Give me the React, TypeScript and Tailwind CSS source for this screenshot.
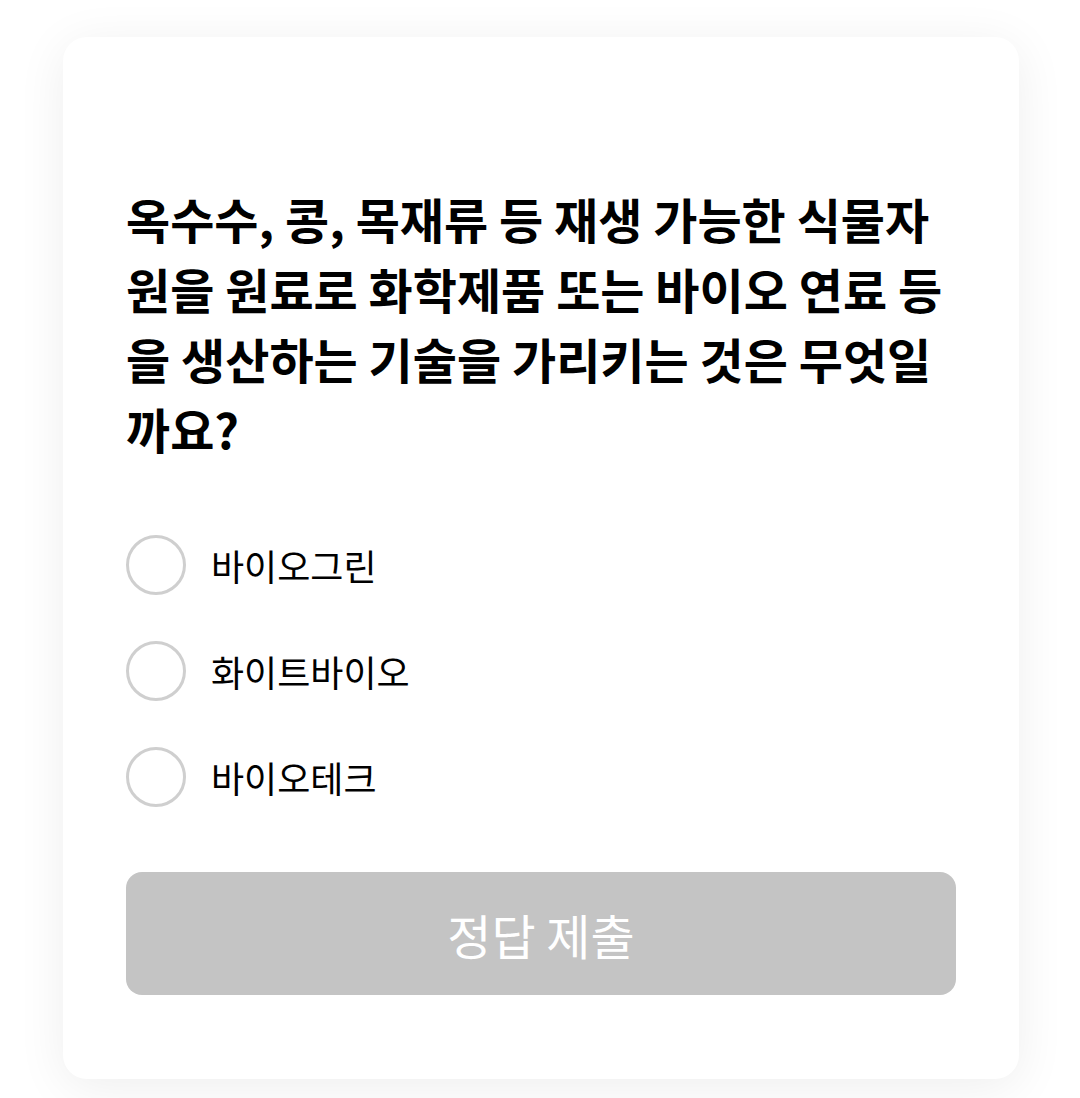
export default function App() {
  const options = ["바이오그린", "화이트바이오", "바이오테크"];

  return (
    <div
      className="min-h-screen bg-white pl-[63px] pr-[61px] pt-[37px] pb-[19px]"
      style={{ fontFamily: '"Noto Sans CJK KR", "Noto Sans", sans-serif' }}
    >
      <div className="rounded-[24px] bg-white px-[63px] pt-[146px] pb-[84px] shadow-[0_8px_50px_rgba(0,0,0,0.07)]">
        <h2 className="text-[48px] leading-[70px] font-bold break-all text-black">
          옥수수, 콩, 목재류 등 재생 가능한 식물자원을 원료로 화학제품 또는 바이오 연료 등을 생산하는 기술을 가리키는 것은 무엇일까요?
        </h2>

        <ul className="mt-[72px] flex flex-col gap-[46px]">
          {options.map((label) => (
            <li key={label} className="flex h-[60px] items-center gap-[25px]">
              <span className="h-[60px] w-[60px] shrink-0 rounded-full border-[3px] border-[#cfcfcf]" />
              <span className="text-[36px] leading-none text-black">{label}</span>
            </li>
          ))}
        </ul>

        <button
          type="button"
          disabled
          className="mt-[65px] flex h-[123px] w-full items-center justify-center rounded-[16px] bg-[#c4c4c4] text-[48px] font-normal text-white"
        >
          정답 제출
        </button>
      </div>
    </div>
  );
}
